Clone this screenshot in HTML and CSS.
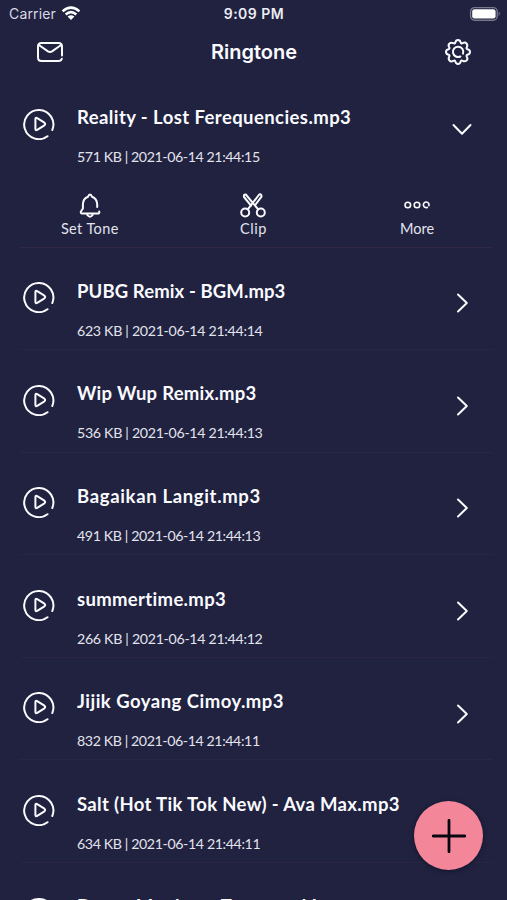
FILE: index.html
```html
<!DOCTYPE html>
<html lang="en">
<head>
<meta charset="utf-8">
<title>Ringtone</title>
<link rel="stylesheet" href="styles.css">
</head>
<body>
<svg class="defs" aria-hidden="true">
  <symbol id="play" viewBox="0 0 32 32"><path d="M24.5 28.2A14.6 14.6 0 1 1 29.3 22M12.4 11.2v9.6q0 2 1.8 1l7.2-4.5q1.5-1.3 0-2.6l-7.2-4.5q-1.8-1-1.8 1z"/></symbol>
  <symbol id="chevron" viewBox="0 0 20 20"><path d="M6 1.5l8.8 8.5L6 18.5"/></symbol>
</svg>
<div class="screen">
  <div class="status">
    <div class="carrier"><span>Carrier</span>
      <svg class="wifi" viewBox="0 0 20 15"><path d="M1.6 5.4Q10-2.2 18.4 5.4M4.7 8.5Q10 3.8 15.3 8.5"/><path class="solid" d="M6.6 10.6Q10 7.8 13.4 10.6L10 14z"/></svg>
    </div>
    <div class="time">9:09 PM</div>
    <svg class="battery" viewBox="0 0 32 16"><rect class="shell" x="1.6" y="1.6" width="26.6" height="12.6" rx="4"/><rect class="charge" x="3.2" y="3.2" width="23.4" height="9.4" rx="2.4"/><path class="cap" d="M29.6 5.5q2.4 2.2 0 4.8z"/></svg>
  </div>
  <header class="header">
    <svg class="mail" viewBox="0 0 26 20"><path d="M25 13.5V4.5Q25 1 21.5 1h-17Q1 1 1 4.5v11Q1 19 4.5 19h17q2.7 0 3.3-2.3M2.2 3.2L11 9.4q2 1.2 4 0L23.8 3.2"/></svg>
    <h1>Ringtone</h1>
    <svg class="gear" viewBox="0 0 26 26"><path d="M10.3 3.6Q10.8 1 13 1T15.7 3.6Q16.3 5 17.7 4.2Q20 2.8 21.5 4.5T21.8 8.3Q21 9.7 22.4 10.3Q25 10.8 25 13T22.4 15.7Q21 16.3 21.8 17.7Q23.2 20 21.5 21.5T17.7 21.8Q16.3 21 15.7 22.4Q15.2 25 13 25T10.3 22.4Q9.7 21 8.3 21.8Q6 23.2 4.5 21.5T4.2 17.7Q5 16.3 3.6 15.7Q1 15.2 1 13T3.6 10.3Q5 9.7 4.2 8.3Q2.8 6 4.5 4.5T8.3 4.2Q9.7 5 10.3 3.6z"/><path d="M15.4 17.5A5.2 5.2 0 1 1 18 14.6"/></svg>
  </header>
  <main class="list">
    <section class="item open">
      <svg class="play"><use href="#play"/></svg>
      <div class="text"><h2 class="t1">Reality - Lost Ferequencies.mp3</h2><p class="m1">571 KB | 2021-06-14 21:44:15</p></div>
      <svg class="chevron down"><use href="#chevron"/></svg>
      <div class="actions">
        <div class="action"><svg viewBox="0 0 26 26"><path d="M20.2 15V12.2Q19.8 6.5 15 4.8Q14.3 2.5 13 2.5T11 4.8Q6.2 6.5 5.9 12.2V16.5L3.9 19.5Q3.3 21.6 5.2 21.6H20.5Q22.8 21.6 22.2 19.5M10.3 23Q13 26.5 15.7 23"/></svg><span class="set">Set Tone</span></div>
        <div class="action"><svg viewBox="0 0 26 26"><circle cx="5.2" cy="20.5" r="4"/><circle cx="20.8" cy="20.5" r="4"/><path d="M7.8 17.4L19.2 2.5Q21.8 1.8 21.5 4.6L15.2 13M18.2 17.4L5.8 2.5Q3.5 2 4 5L11 13.7"/></svg><span class="clip">Clip</span></div>
        <div class="action"><svg class="dots" viewBox="0 0 26 26"><circle cx="3.8" cy="13" r="2.8"/><circle cx="13" cy="13" r="2.8"/><path d="M23.3 15.4A2.8 2.8 0 1 1 24.9 13.6"/></svg><span class="more">More</span></div>
      </div>
    </section>
    <section class="item">
      <svg class="play"><use href="#play"/></svg>
      <div class="text"><h2 class="t2">PUBG Remix - BGM.mp3</h2><p class="m2">623 KB | 2021-06-14 21:44:14</p></div>
      <svg class="chevron"><use href="#chevron"/></svg>
    </section>
    <section class="item">
      <svg class="play"><use href="#play"/></svg>
      <div class="text"><h2 class="t3">Wip Wup Remix.mp3</h2><p class="m3">536 KB | 2021-06-14 21:44:13</p></div>
      <svg class="chevron"><use href="#chevron"/></svg>
    </section>
    <section class="item">
      <svg class="play"><use href="#play"/></svg>
      <div class="text"><h2 class="t4">Bagaikan Langit.mp3</h2><p class="m4">491 KB | 2021-06-14 21:44:13</p></div>
      <svg class="chevron"><use href="#chevron"/></svg>
    </section>
    <section class="item">
      <svg class="play"><use href="#play"/></svg>
      <div class="text"><h2 class="t5">summertime.mp3</h2><p class="m5">266 KB | 2021-06-14 21:44:12</p></div>
      <svg class="chevron"><use href="#chevron"/></svg>
    </section>
    <section class="item">
      <svg class="play"><use href="#play"/></svg>
      <div class="text"><h2 class="t6">Jijik Goyang Cimoy.mp3</h2><p class="m6">832 KB | 2021-06-14 21:44:11</p></div>
      <svg class="chevron"><use href="#chevron"/></svg>
    </section>
    <section class="item">
      <svg class="play"><use href="#play"/></svg>
      <div class="text"><h2 class="t7">Salt (Hot Tik Tok New) - Ava Max.mp3</h2><p class="m7">634 KB | 2021-06-14 21:44:11</p></div>
    </section>
    <section class="item">
      <svg class="play"><use href="#play"/></svg>
      <div class="text"><h2 class="t8">Dance Monkey - Tones and I</h2></div>
    </section>
  </main>
  <button class="add" aria-label="Add"><svg viewBox="0 0 34 34"><path d="M17 1.3v31.4M1.3 17h31.4"/></svg></button>
</div>
</body>
</html>
```
FILE: styles.css
```css
* { box-sizing: border-box; margin: 0; padding: 0; }
body { background: #20223f; color: #fafaff; font-family: Lato, "Liberation Sans", sans-serif; overflow: hidden; }
svg { display: block; fill: none; stroke: currentColor; stroke-width: 2; stroke-linecap: round; stroke-linejoin: round; flex: none; }
.defs { position: absolute; width: 0; height: 0; }
.screen { position: relative; width: 507px; height: 900px; overflow: hidden; }
.status { display: grid; grid-template-columns: 1fr auto 1fr; align-items: center; height: 27px; padding: 0 6px 0 9px; font-family: Inter, sans-serif; }
.carrier { display: flex; align-items: center; gap: 5px; font-size: 14px; letter-spacing: .15px; color: #d9d9e4; }
.wifi { width: 20px; height: 15px; color: #fff; stroke-width: 2.6; stroke-linecap: butt; margin-top: -1px; }
.solid { fill: currentColor; stroke: none; }
.time { font-size: 14px; font-weight: 600; letter-spacing: .5px; margin-left: -2px; color: #ececf3; }
.battery { width: 32px; height: 16px; justify-self: end; stroke: none; }
.shell { stroke: #77788c; stroke-width: 1.4; }
.charge { fill: #fff; }
.cap { fill: #77788c; }
.header { display: flex; align-items: center; justify-content: space-between; height: 50px; padding: 0 36px 0 37px; }
.header h1 { font: 600 20px/24px Inter, sans-serif; }
.mail { width: 26px; height: 20px; }
.gear { width: 26px; height: 26px; }
.list { margin-top: -3px; }
.item { display: grid; grid-template-columns: 32px 1fr 20px; column-gap: 22px; align-items: start; height: 102.6px; margin: 0 14px 0 20px; padding: 0 21px 0 3px; border-bottom: 1px solid #292542; }
.item.open { height: 173.5px; border-color: #2f2945; }
.play { width: 32px; height: 32px; margin-top: 33.5px; }
.text { padding-top: 31.4px; white-space: nowrap; min-width: 0; }
.text h2 { font-size: 18.5px; font-weight: 700; line-height: 24px; font-variant-ligatures: none; }
.text p { font-size: 14.2px; line-height: 20px; margin-top: 18px; color: #e3e3ee; }
.t1 { letter-spacing: .42px; }
.t2 { letter-spacing: .1px; }
.t3 { letter-spacing: .26px; }
.t4 { letter-spacing: .66px; }
.t5 { letter-spacing: .33px; }
.t6 { letter-spacing: .48px; }
.t7, .t8 { letter-spacing: .34px; }
.m1, .m6 { letter-spacing: -.41px; }
.m2, .m3, .m5 { letter-spacing: -.31px; }
.m4, .m7 { letter-spacing: -.39px; }
.chevron { width: 20px; height: 20px; margin-top: 45.8px; }
.down { margin-top: 45px; transform: rotate(90deg); }
.actions { grid-column: 1 / -1; display: grid; grid-template-columns: repeat(3, 1fr); margin: 15.6px -27px 0 -15px; }
.action { display: flex; flex-direction: column; align-items: center; font-size: 14.5px; line-height: 18px; color: #e3e3ee; }
.action svg { width: 26px; height: 26px; margin-bottom: 2px; color: #fafaff; }
.action .dots { stroke-width: 1.6; }
.set { letter-spacing: .4px; }
.clip { letter-spacing: .6px; }
.add { position: absolute; left: 414px; top: 801px; width: 69px; height: 69px; border: 0; border-radius: 50%; background: #f4869a; color: #080812; display: grid; place-items: center; box-shadow: 0 1px 5px #14162c; }
.add svg { width: 34px; height: 34px; stroke-width: 2.8; }
```
